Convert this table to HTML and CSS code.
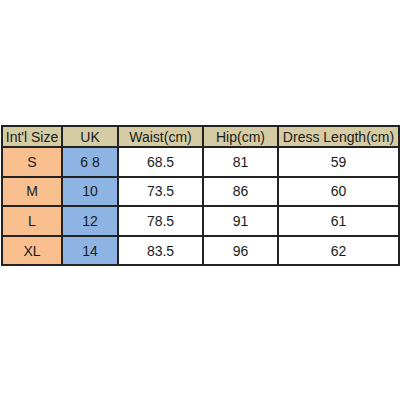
FILE: index.html
```html
<!DOCTYPE html>
<html>
<head>
<meta charset="utf-8">
<link rel="stylesheet" href="styles.css">
</head>
<body>
<table class="size-table">
  <colgroup>
    <col class="c1"><col class="c2"><col class="c3"><col class="c4"><col class="c5">
  </colgroup>
  <thead>
    <tr class="head">
      <th>Int'l Size</th><th>UK</th><th>Waist(cm)</th><th>Hip(cm)</th><th>Dress Length(cm)</th>
    </tr>
  </thead>
  <tbody>
    <tr><td class="intl">S</td><td class="uk">6 8</td><td>68.5</td><td>81</td><td>59</td></tr>
    <tr><td class="intl">M</td><td class="uk">10</td><td>73.5</td><td>86</td><td>60</td></tr>
    <tr><td class="intl">L</td><td class="uk">12</td><td>78.5</td><td>91</td><td>61</td></tr>
    <tr><td class="intl">XL</td><td class="uk">14</td><td>83.5</td><td>96</td><td>62</td></tr>
  </tbody>
</table>
</body>
</html>
```

FILE: styles.css
```css
html, body {
  margin: 0;
  padding: 0;
  background: #ffffff;
}
body {
  font-family: "Liberation Sans", Arial, sans-serif;
  color: #1a1a1a;
}
.size-table {
  margin-top: 125px;
  margin-left: 1px;
  border-collapse: collapse;
  table-layout: fixed;
  width: 397px;
  font-size: 14px;
}
.c1 { width: 60px; }
.c2 { width: 56px; }
.c3 { width: 85px; }
.c4 { width: 75px; }
.c5 { width: 121px; }
.size-table th,
.size-table td {
  border: 2px solid #222;
  padding: 0;
  text-align: center;
  font-weight: normal;
  white-space: nowrap;
}
.head th {
  background: #d6cca4;
  height: 19px;
}
.size-table td {
  height: 27.6px;
}
.intl { background: #f9bf8f; }
.uk { background: #8db4e2; }
```
